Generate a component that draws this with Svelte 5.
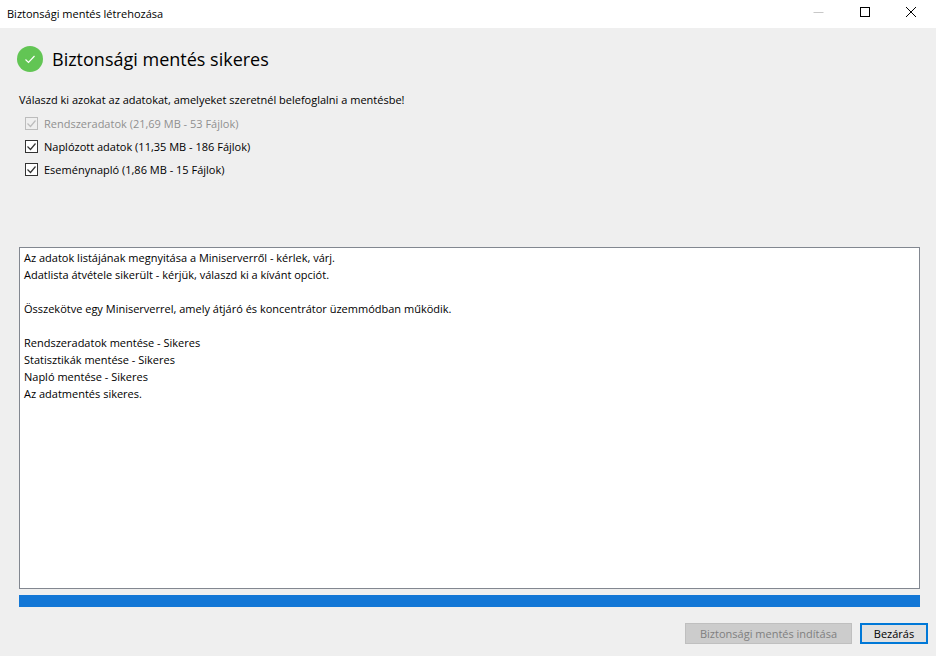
<script>
  const options = [
    { label: 'Rendszeradatok (21,69 MB - 53 Fájlok)', disabled: true },
    { label: 'Naplózott adatok (11,35 MB - 186 Fájlok)', disabled: false },
    { label: 'Eseménynapló (1,86 MB - 15 Fájlok)', disabled: false }
  ];

  const log = [
    'Az adatok listájának megnyitása a Miniserverről - kérlek, várj.',
    'Adatlista átvétele sikerült - kérjük, válaszd ki a kívánt opciót.',
    '',
    'Összekötve egy Miniserverrel, amely átjáró és koncentrátor üzemmódban működik.',
    '',
    'Rendszeradatok mentése - Sikeres',
    'Statisztikák mentése - Sikeres',
    'Napló mentése - Sikeres',
    'Az adatmentés sikeres.'
  ];
</script>

<div class="window">
  <header class="titlebar">
    <span class="title">Biztonsági mentés létrehozása</span>
    <div class="controls">
      <svg width="46" height="28" viewBox="0 0 46 28"><path d="M17.5 12.5h10" stroke="#c8c8c8" fill="none" /></svg>
      <svg width="46" height="28" viewBox="0 0 46 28"><rect x="18.5" y="7.5" width="9" height="9" stroke="#000" fill="none" /></svg>
      <svg width="46" height="28" viewBox="0 0 46 28"><path d="M18 7l10 10M28 7l-10 10" stroke="#000" fill="none" /></svg>
    </div>
  </header>

  <main class="body">
    <div class="heading">
      <svg width="26" height="26" viewBox="0 0 26 26">
        <circle cx="13" cy="13" r="13" fill="#62c554" />
        <path d="M8.5 13.5l3 3 6-6.5" stroke="#fff" stroke-width="1.2" fill="none" />
      </svg>
      <h1>Biztonsági mentés sikeres</h1>
    </div>

    <p class="prompt">Válaszd ki azokat az adatokat, amelyeket szeretnél belefoglalni a mentésbe!</p>

    <ul class="options">
      {#each options as opt}
        <li class:disabled={opt.disabled}>
          <svg width="13" height="13" viewBox="0 0 13 13">
            <rect x="0.5" y="0.5" width="12" height="12" class="box" />
            <path d="M2.5 6.5l3 3 5-6" class="tick" />
          </svg>
          <span>{opt.label}</span>
        </li>
      {/each}
    </ul>

    <div class="log">
      {#each log as line}
        <div class="line">{line}</div>
      {/each}
    </div>

    <div class="progress"></div>

    <div class="actions">
      <button class="start" disabled>Biztonsági mentés indítása</button>
      <button class="close">Bezárás</button>
    </div>
  </main>
</div>

<style>
  :global(body) {
    margin: 0;
    background: #efefef;
  }

  .window {
    width: 936px;
    height: 656px;
    display: flex;
    flex-direction: column;
    font-family: "Open Sans", "Noto Sans", sans-serif;
    font-size: 11px;
    color: #000;
    overflow: hidden;
  }

  .titlebar {
    height: 28px;
    flex: none;
    background: #fff;
    display: flex;
    align-items: center;
    justify-content: space-between;
  }

  .title {
    margin-left: 7px;
    margin-top: -2px;
  }

  .controls {
    display: flex;
    margin-right: 2px;
  }

  .body {
    flex: 1;
    display: flex;
    flex-direction: column;
    padding: 18px 16px 11px 19px;
    min-height: 0;
  }

  .heading {
    display: flex;
    align-items: center;
    gap: 9px;
    margin-left: -2px;
    height: 26px;
  }

  h1 {
    margin: 0;
    font-size: 18px;
    font-weight: 400;
    line-height: 26px;
  }

  .prompt {
    margin: 20px 0 0;
    line-height: 16px;
  }

  .options {
    list-style: none;
    margin: 7px 0 0;
    padding: 0 0 0 6px;
    display: flex;
    flex-direction: column;
    gap: 7px;
  }

  .options li {
    display: flex;
    align-items: center;
    gap: 6px;
    height: 16px;
  }

  .options li.disabled {
    color: #8f8f8f;
  }

  .box {
    fill: #fff;
    stroke: #333;
  }

  .tick {
    fill: none;
    stroke: #333;
    stroke-width: 1.2;
  }

  .disabled .box {
    fill: none;
    stroke: #bcbcbc;
  }

  .disabled .tick {
    stroke: #bcbcbc;
  }

  .log {
    margin-top: 70px;
    width: 901px;
    height: 342px;
    box-sizing: border-box;
    flex: none;
    background: #fff;
    border: 1px solid #828790;
    padding: 1px 4px;
  }

  .line {
    height: 17px;
    line-height: 17px;
  }

  .progress {
    margin-top: 6px;
    width: 901px;
    height: 12px;
    flex: none;
    background: #1377d6;
  }

  .actions {
    margin-top: 16px;
    display: flex;
    justify-content: flex-end;
    gap: 8px;
    margin-right: -8px;
  }

  button {
    height: 21px;
    box-sizing: border-box;
    padding: 0;
    font: inherit;
  }

  .start {
    width: 167px;
    background: #cccccc;
    border: 1px solid #bfbfbf;
    color: #7f7f7f;
  }

  .close {
    width: 68px;
    background: #e1e1e1;
    border: 2px solid #0078d7;
    color: #000;
  }
</style>
